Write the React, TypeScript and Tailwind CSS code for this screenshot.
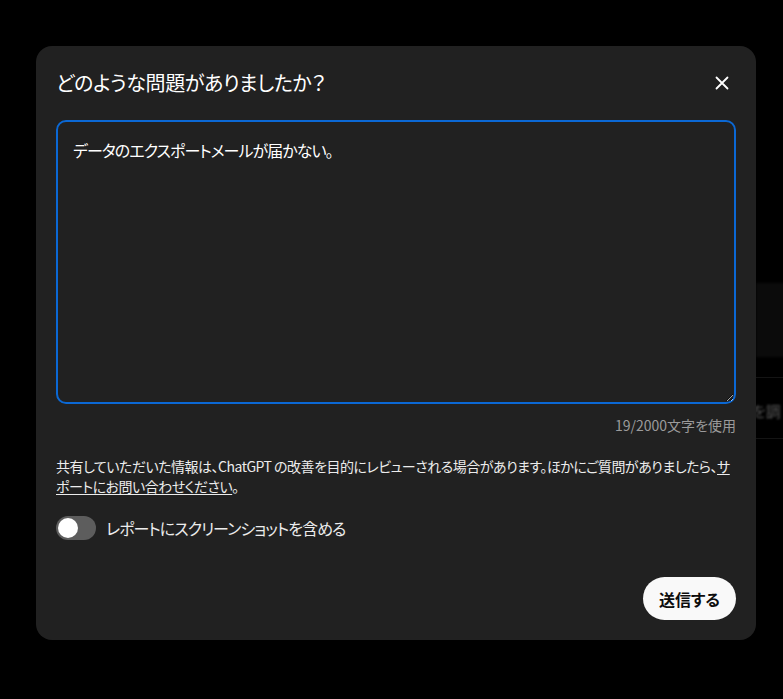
import { useState } from 'react'

const font = '"Noto Sans CJK JP", "Noto Sans", sans-serif'

export default function App() {
    const [text, setText] = useState('データのエクスポートメールが届かない。')
    const [includeShot, setIncludeShot] = useState(false)

    return (
        <div
            className="relative min-h-[699px] w-full overflow-hidden bg-black pt-[46px] pl-[36px] [font-feature-settings:'palt']"
            style={{ fontFamily: font }}
        >
            {/* dimmed page behind the dialog */}
            <div className="absolute left-[756px] top-[283px] h-[74px] w-[40px] bg-[#0b0b0b] blur-[1px]" />
            <div className="absolute left-[756px] top-[377px] h-px w-[40px] bg-[#141414]" />
            <div className="absolute left-[752px] top-[401px] text-[15px] leading-[20px] text-[#555] blur-[1px] whitespace-nowrap">
                を調
            </div>
            <div className="absolute left-[756px] top-[438px] h-px w-[40px] bg-[#141414]" />

            <div className="relative flex w-[720px] flex-col rounded-[16px] bg-[#212121] px-5 pt-[21px] pb-5 text-[#ececec]">
                <div className="flex items-center justify-between">
                    <h2 className="text-[20px] leading-[30px] font-normal tracking-[-0.02em] text-white">
                        どのような問題がありましたか？
                    </h2>
                    <button className="-mr-[2px] flex h-8 w-8 items-center justify-center text-white">
                        <svg width="20" height="20" viewBox="0 0 20 20" fill="none">
                            <path
                                d="M4.5 4.5L15.5 15.5M15.5 4.5L4.5 15.5"
                                stroke="currentColor"
                                strokeWidth="1.8"
                                strokeLinecap="round"
                            />
                        </svg>
                    </button>
                </div>

                <textarea
                    className="mt-[21px] h-[284px] w-full resize-y rounded-[10px] border-2 border-[#0b68d4] bg-[#212121] px-[15px] py-[16px] text-[16px] leading-[24px] tracking-[-0.06em] text-white outline-none [font-feature-settings:'palt']"
                    value={text}
                    onChange={(e) => setText(e.target.value)}
                    style={{ fontFamily: font }}
                />
                <p className="mt-[11px] text-right text-[14px] leading-[20px] text-[#9b9b9b]">
                    {text.length}/2000文字を使用
                </p>

                <p className="mt-[21px] text-[14px] leading-[20px] tracking-[-0.036em] text-[#ececec]">
                    共有していただいた情報は、ChatGPT の改善を目的にレビューされる場合があります。ほかにご質問がありましたら、
                    <a href="#" className="underline underline-offset-2">
                        サポートにお問い合わせください
                    </a>
                    。
                </p>

                <label className="mt-[20px] flex cursor-pointer items-center gap-[10px]">
                    <button
                        type="button"
                        onClick={() => setIncludeShot(!includeShot)}
                        className={`flex h-[24px] w-[40px] items-center rounded-full p-[2px] ${
                            includeShot ? 'bg-[#0b68d4]' : 'bg-[#5d5d5d]'
                        }`}
                    >
                        <span
                            className={`h-[20px] w-[20px] rounded-full bg-white ${
                                includeShot ? 'translate-x-[16px]' : ''
                            }`}
                        />
                    </button>
                    <span className="text-[16px] leading-[24px] tracking-[-0.06em] text-[#ececec]">
                        レポートにスクリーンショットを含める
                    </span>
                </label>

                <div className="mt-[37px] flex justify-end">
                    <button className="h-[43px] rounded-full bg-[#f9f9f9] px-[16px] text-[16px] font-semibold text-[#0d0d0d]">
                        送信する
                    </button>
                </div>
            </div>
        </div>
    )
}
